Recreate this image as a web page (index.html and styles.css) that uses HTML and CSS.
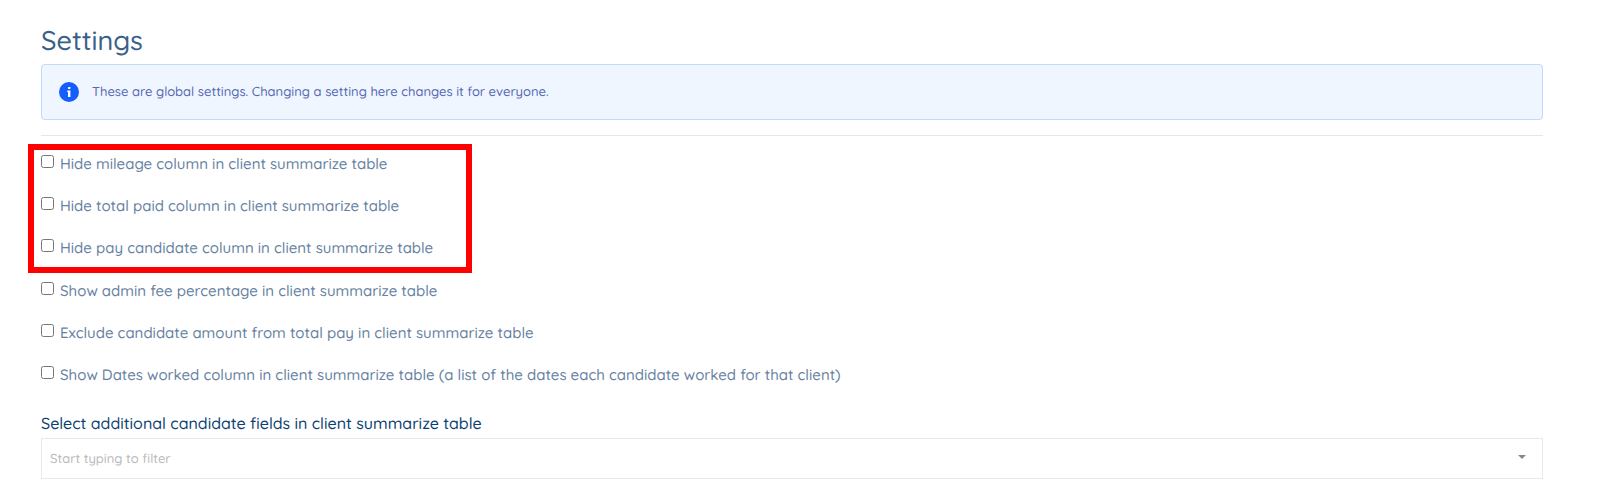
FILE: index.html
```html
<!DOCTYPE html>
<html lang="en">
<head>
    <meta charset="UTF-8">
    <meta name="viewport" content="width=device-width, initial-scale=1.0">
    <title>Settings</title>
    <link rel="stylesheet" href="styles.css">
</head>
<body>
    <main class="settings">
        <h1 class="settings-title">Settings</h1>

        <div class="alert">
            <svg class="alert-icon" viewBox="0 0 20 20" aria-hidden="true">
                <circle cx="10" cy="10" r="10" fill="#155dfc"/>
                <rect x="9" y="5" width="2.4" height="2" rx="0.4" fill="#fff"/>
                <path d="M8.2 8.5h3.2V15H9v-5h-.8z" fill="#fff"/>
            </svg>
            <p class="alert-text">These are global settings. Changing a setting here changes it for everyone.</p>
        </div>

        <hr class="divider">

        <form class="settings-form">
            <div class="option-group highlighted">
                <label class="option"><input type="checkbox" class="option-check"> Hide mileage column in client summarize table</label>
                <label class="option"><input type="checkbox" class="option-check"> Hide total paid column in client summarize table</label>
                <label class="option"><input type="checkbox" class="option-check"> Hide pay candidate column in client summarize table</label>
            </div>

            <div class="option-group">
                <label class="option"><input type="checkbox" class="option-check"> Show admin fee percentage in client summarize table</label>
                <label class="option"><input type="checkbox" class="option-check"> Exclude candidate amount from total pay in client summarize table</label>
                <label class="option"><input type="checkbox" class="option-check"> Show Dates worked column in client summarize table (a list of the dates each candidate worked for that client)</label>
            </div>

            <label class="field-label" for="candidate-fields">Select additional candidate fields in client summarize table</label>
            <div class="filter">
                <input type="text" class="filter-input" id="candidate-fields" placeholder="Start typing to filter">
                <svg class="filter-caret" viewBox="0 0 8 4" aria-hidden="true">
                    <path d="M0 0h8L4 4z" fill="#888"/>
                </svg>
            </div>
        </form>
    </main>
</body>
</html>
```
FILE: styles.css
```css
* {
    box-sizing: border-box;
}

body {
    margin: 0;
    background-color: #fff;
    color: #6682a2;
    font-family: Quicksand, Lato, sans-serif;
    font-size: 15px;
    font-weight: 500;
    line-height: 24px;
    text-rendering: geometricPrecision;
}

.settings {
    padding: 24px 57px 20px 41px;
}

.settings-title {
    margin: 0;
    color: #3a6188;
    font-size: 27px;
    font-weight: 500;
    line-height: 32px;
}

.alert {
    display: flex;
    align-items: center;
    gap: 13px;
    margin-top: 8px;
    padding: 15px 17px;
    background-color: #eff6ff;
    border: 1px solid #bedbff;
    border-radius: 4px;
}

.alert-icon {
    width: 20px;
    height: 20px;
}

.alert-text {
    margin: 0;
    color: #5668b3;
    font-size: 13px;
}

.divider {
    margin: 15px 0 16px;
    border: 0;
    border-top: 1px solid #e5e7eb;
}

.option-group {
    display: flex;
    flex-direction: column;
    align-items: flex-start;
    gap: 18px;
    margin-bottom: 19px;
}

.option {
    display: flex;
    align-items: flex-start;
    gap: 6px;
}

.option-check {
    width: 13px;
    height: 13px;
    margin: 3px 0 0;
}

/* red frame around the first three options */
.highlighted {
    position: relative;
}

.highlighted::after {
    content: "";
    box-sizing: border-box;
    position: absolute;
    top: -8px;
    left: -13px;
    width: 444px;
    height: 129px;
    border: 6px solid #f00;
    pointer-events: none;
}

.field-label {
    display: block;
    margin-top: 24px;
    color: #0b4272;
    font-size: 16px;
}

.filter {
    position: relative;
    margin-top: 3px;
}

.filter-input {
    display: block;
    width: 100%;
    height: 41px;
    padding: 0 32px 0 8px;
    background-color: #fff;
    border: 1px solid #e8e8e8;
    border-radius: 0;
    color: #6682a2;
    font-family: inherit;
    font-size: 13px;
    font-weight: 500;
    text-rendering: inherit;
}

.filter-input::placeholder {
    color: #b9b9b9;
}

.filter-caret {
    position: absolute;
    top: 17px;
    right: 17px;
    width: 8px;
    height: 4px;
}
```
